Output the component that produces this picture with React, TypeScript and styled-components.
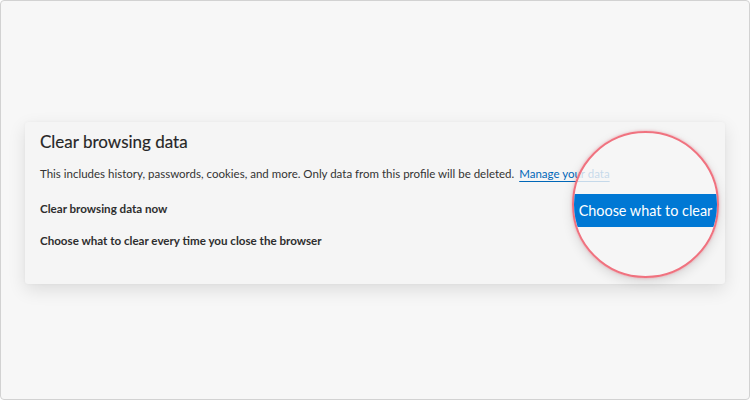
import { FC } from 'react';
import styled, { createGlobalStyle } from 'styled-components';

const GlobalStyle = createGlobalStyle`
  html, body {
    margin: 0;
    padding: 0;
    background: #ffffff;
  }
  body {
    font-family: Lato, 'Noto Sans', sans-serif;
  }
`;

const Frame = styled.div`
  box-sizing: border-box;
  width: 750px;
  height: 400px;
  border: 1px solid #d2d2d2;
  border-radius: 4px;
  background: #f7f7f7;
  padding: 121px 0 0 24px;
`;

const Card = styled.section`
  position: relative;
  box-sizing: border-box;
  width: 700px;
  height: 162px;
  padding: 9px 15px 0;
  background: #f5f5f5;
  border-radius: 3px;
  box-shadow: 0 6px 18px rgba(0, 0, 0, 0.11), 0 0 3px rgba(0, 0, 0, 0.04);
  display: flex;
  flex-direction: column;
`;

const Title = styled.h2`
  margin: 0;
  font-size: 17px;
  font-weight: 400;
  line-height: 22px;
  color: #262626;
  -webkit-text-stroke: 0.15px #262626;
`;

const Description = styled.p`
  margin: 11px 0 0;
  font-size: 11.5px;
  line-height: 20px;
  color: #333333;
  white-space: nowrap;
`;

const Link = styled.a`
  margin-left: 2px;
  color: #0067b8;
  text-decoration: underline;
  text-underline-offset: 3px;
`;

const SettingRow = styled.div<{ $gap: number }>`
  margin-top: ${(p) => p.$gap}px;
  font-size: 11.6px;
  line-height: 20px;
  font-weight: 700;
  color: #2e2e2e;
`;

const Lens = styled.div`
  position: absolute;
  left: 547px;
  top: 9px;
  box-sizing: border-box;
  width: 147px;
  height: 147px;
  border-radius: 50%;
  border: 2.5px solid #f0727f;
  background: rgba(246, 246, 246, 0.8);
  overflow: hidden;
  box-shadow: 0 0 3px rgba(240, 100, 120, 0.55), 0 4px 12px rgba(0, 0, 0, 0.12);
  display: flex;
  flex-direction: column;
`;

const LensButton = styled.div`
  margin-top: 61px;
  height: 33px;
  background: #0078d4;
  color: #ffffff;
  font-size: 14.4px;
  line-height: 33px;
  text-align: center;
  white-space: nowrap;
`;

const App: FC = () => {
  return (
    <>
      <GlobalStyle />
      <Frame>
        <Card>
          <Title>Clear browsing data</Title>
          <Description>
            This includes history, passwords, cookies, and more. Only data from
            this profile will be deleted. <Link>Manage your data</Link>
          </Description>
          <SettingRow $gap={15}>Clear browsing data now</SettingRow>
          <SettingRow $gap={12}>
            Choose what to clear every time you close the browser
          </SettingRow>
          <Lens>
            <LensButton>Choose what to clear</LensButton>
          </Lens>
        </Card>
      </Frame>
    </>
  );
};

export default App;
